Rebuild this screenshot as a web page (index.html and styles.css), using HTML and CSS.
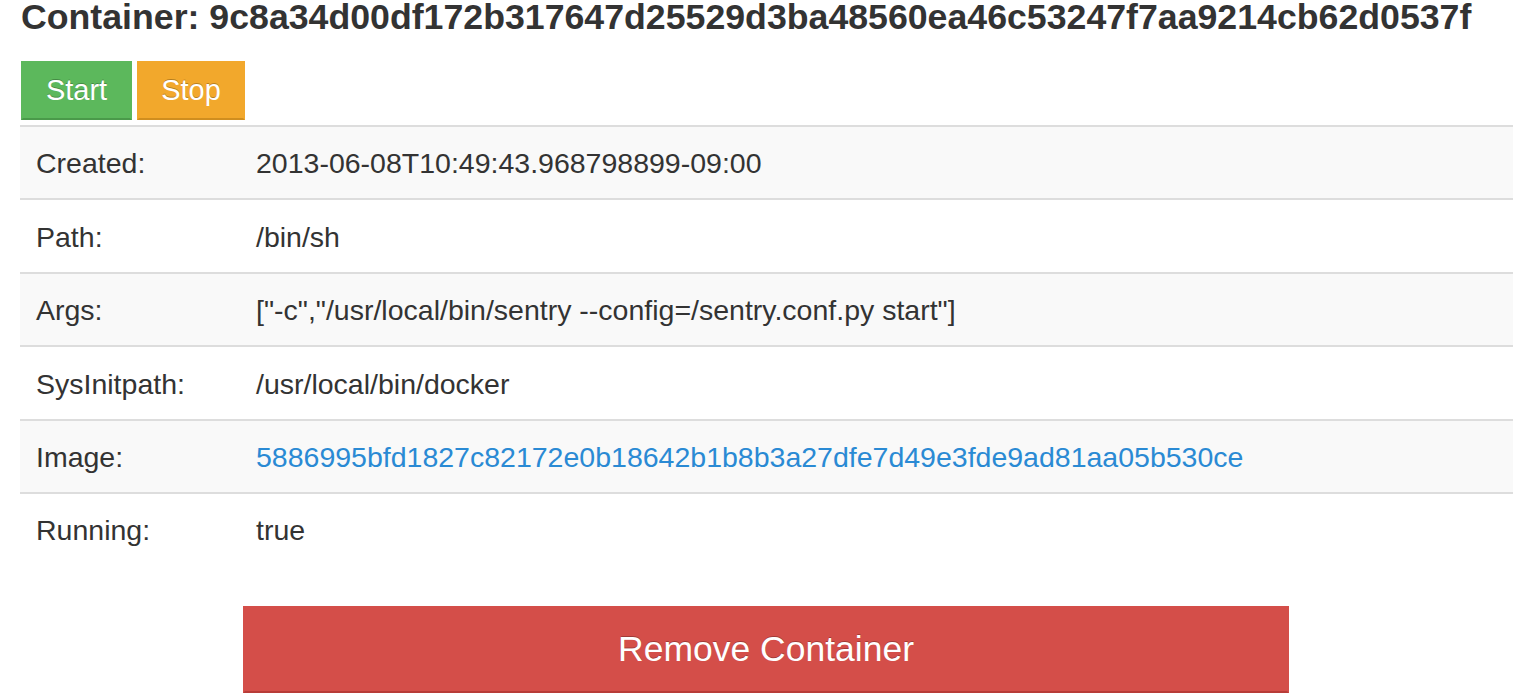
FILE: index.html
```html
<!DOCTYPE html>
<html>
<head>
<meta charset="utf-8">
<title>Container</title>
<link rel="stylesheet" href="styles.css">
</head>
<body>
<div class="page">
  <h4 class="title">Container: 9c8a34d00df172b317647d25529d3ba48560ea46c53247f7aa9214cb62d0537f</h4>
  <div class="actions">
    <button class="btn btn-success">Start</button>
    <button class="btn btn-warning">Stop</button>
  </div>
  <table class="info">
    <tbody>
      <tr><td class="key">Created:</td><td>2013-06-08T10:49:43.968798899-09:00</td></tr>
      <tr><td class="key">Path:</td><td>/bin/sh</td></tr>
      <tr><td class="key">Args:</td><td>["-c","/usr/local/bin/sentry --config=/sentry.conf.py start"]</td></tr>
      <tr><td class="key">SysInitpath:</td><td>/usr/local/bin/docker</td></tr>
      <tr><td class="key">Image:</td><td><a class="link" href="#">5886995bfd1827c82172e0b18642b1b8b3a27dfe7d49e3fde9ad81aa05b530ce</a></td></tr>
      <tr><td class="key">Running:</td><td>true</td></tr>
    </tbody>
  </table>
  <div class="remove-wrap">
    <button class="btn btn-danger btn-large">Remove Container</button>
  </div>
</div>
</body>
</html>
```

FILE: styles.css
```css
html, body {
  margin: 0;
  padding: 0;
  background: #fff;
}
body {
  font-family: "Liberation Sans", Arial, Helvetica, sans-serif;
  color: #333;
  font-size: 28px;
}
.page {
  width: 1492px;
  padding-left: 20px;
}
.title {
  margin: 0;
  font-size: 35.7px;
  line-height: 35px;
  font-weight: bold;
  color: #333;
  padding-left: 1px;
}
.actions {
  margin-top: 26px;
  display: flex;
  gap: 5px;
  padding-left: 1px;
}
.btn {
  font-family: "Liberation Sans", Arial, Helvetica, sans-serif;
  color: #fff;
  border: 2px solid transparent;
  border-radius: 0;
  cursor: pointer;
  text-shadow: 0 -1px 0 rgba(0, 0, 0, 0.25);
  margin: 0;
}
.actions .btn {
  font-size: 29px;
  height: 59px;
  padding: 0;
  line-height: 55px;
}
.btn-success {
  background: #5cb85c;
  border-color: #5cb85c #5cb85c #4a9a4a;
  width: 111px;
}
.btn-warning {
  background: #f2a82c;
  border-color: #f2a82c #f2a82c #d08e1f;
  width: 108px;
}
.info {
  width: 1493px;
  border-collapse: collapse;
  margin-top: 5px;
}
.info td {
  border-top: 2px solid #dddddd;
  padding: 17.4px 0 14.4px 16px;
  line-height: 39.6px;
  font-size: 28.5px;
  color: #333;
  text-align: left;
  vertical-align: top;
}
.info td.key {
  width: 204px;
}
.info tr:nth-child(odd) td {
  background: #f9f9f9;
}
.link {
  color: #2a8ad4;
  text-decoration: none;
}
.remove-wrap {
  display: flex;
  justify-content: center;
  margin-top: 41px;
}
.btn-large {
  width: 1046px;
  height: 87px;
  font-size: 35.5px;
  background: #d44e49;
  border-color: #d44e49 #d44e49 #b83c38;
}
```
